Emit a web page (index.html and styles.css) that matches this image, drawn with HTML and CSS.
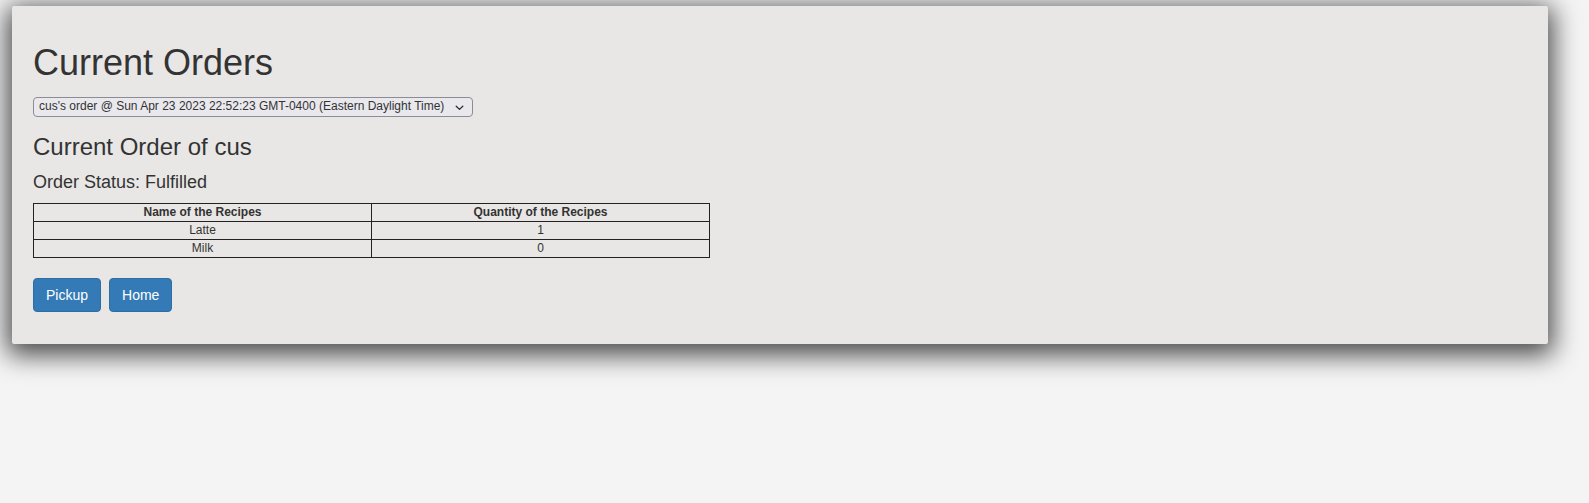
FILE: index.html
```html
<!DOCTYPE html>
<html lang="en">
<head>
<meta charset="utf-8">
<title>Current Orders</title>
<link rel="stylesheet" href="styles.css">
</head>
<body>
<div class="page">
  <div class="card">
    <h1 class="title">Current Orders</h1>
    <div class="picker">
      <select class="order-select">
        <option>cus's order @ Sun Apr 23 2023 22:52:23 GMT-0400 (Eastern Daylight Time)</option>
      </select>
      <svg class="chevron" width="9" height="6" viewBox="0 0 9 6" aria-hidden="true"><path d="M1.2 1.3 L4.5 4.4 L7.8 1.3" fill="none" stroke="#2a2a2a" stroke-width="1.3" stroke-linecap="round" stroke-linejoin="round"/></svg>
    </div>
    <h3 class="subtitle">Current Order of cus</h3>
    <h4 class="status">Order Status: Fulfilled</h4>
    <table class="recipes">
      <thead>
        <tr><th>Name of the Recipes</th><th>Quantity of the Recipes</th></tr>
      </thead>
      <tbody>
        <tr><td>Latte</td><td>1</td></tr>
        <tr><td>Milk</td><td>0</td></tr>
      </tbody>
    </table>
    <div class="actions">
      <button class="btn">Pickup</button>
      <button class="btn">Home</button>
    </div>
  </div>
</div>
</body>
</html>
```
FILE: styles.css
```css
html, body {
  margin: 0;
  padding: 0;
  height: 100%;
}
body {
  background: #f4f4f4;
  font-family: "Liberation Sans", Arial, sans-serif;
  font-size: 14px;
  line-height: 1.42857;
  color: #333;
}
.page {
  min-height: 100%;
  padding: 6px 0 0 12px;
  box-sizing: border-box;
}
.card {
  width: 1536px;
  box-sizing: border-box;
  padding: 37px 21px 32px;
  background: #e8e7e5;
  border-radius: 2px;
  box-shadow: 0 6px 26px 5px rgba(0, 0, 0, 0.7);
}
.title {
  margin: 0 0 14px;
  font-size: 36px;
  font-weight: 500;
  line-height: 1.1;
}
.picker {
  position: relative;
  width: 440px;
}
.order-select {
  display: block;
  width: 440px;
  height: 20px;
  -webkit-appearance: none;
  appearance: none;
  font-family: "Liberation Sans", Arial, sans-serif;
  font-size: 12px;
  line-height: 15px;
  color: #333;
  background: #e9e8ed;
  border: 1px solid #8d8c94;
  border-radius: 4px;
  padding: 0 20px 0 5px;
  margin: 0;
}
.chevron {
  position: absolute;
  right: 9px;
  top: 8px;
  pointer-events: none;
}
.subtitle {
  margin: 17px 0 13px;
  font-size: 24px;
  font-weight: 500;
  line-height: 1.1;
}
.status {
  margin: 0 0 10px;
  font-size: 18px;
  font-weight: 500;
  line-height: 1.1;
}
.recipes {
  width: 677px;
  border-collapse: collapse;
  font-size: 12px;
  line-height: 17px;
}
.recipes th, .recipes td {
  border: 1px solid #222;
  padding: 0;
  text-align: center;
  width: 50%;
}
.recipes th {
  font-weight: bold;
}
.actions {
  display: flex;
  gap: 8px;
  margin-top: 20px;
}
.btn {
  font-family: "Liberation Sans", Arial, sans-serif;
  font-size: 14px;
  line-height: 20px;
  padding: 6px 12px;
  color: #fff;
  background: #337ab7;
  border: 1px solid #2e6da4;
  border-radius: 4px;
  cursor: pointer;
}
```
